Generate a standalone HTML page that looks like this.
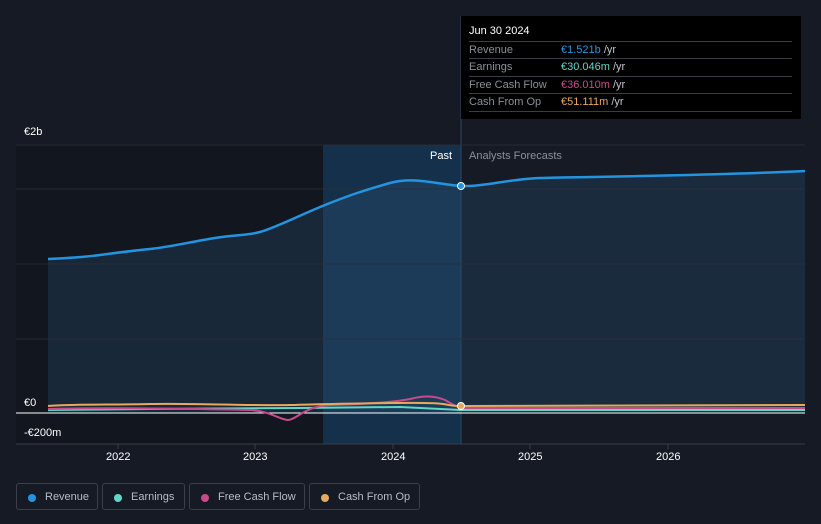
<!DOCTYPE html>
<html><head><meta charset="utf-8"><style>
body{margin:0;width:821px;height:524px;background:#151a24;font-family:"Liberation Sans",sans-serif;overflow:hidden;position:relative}
.t{position:absolute;color:#fff;font-size:11px}
.tip{position:absolute;left:461px;top:16px;width:340px;height:103px;background:#000;color:#fff;font-size:11px}
.tip .h{position:absolute;left:8px;top:9px;font-size:11px}
.row{position:absolute;left:8px;width:323px;border-top:1px solid #3a3d44;height:17px;line-height:17px;color:#8a8f98}
.row span{position:absolute;left:92px}
.row i{font-style:normal;color:#c0c4cc}
.leg{position:absolute;top:483px;height:27px;border:1px solid #3a3f4a;border-radius:3px;color:#b8bcc4;font-size:11px;line-height:27px;box-sizing:border-box}
.leg b{position:absolute;left:11px;top:10px;width:8px;height:8px;border-radius:50%}
.leg span{position:absolute;left:28px}
</style></head><body>
<svg width="821" height="524" style="position:absolute;left:0;top:0">
<rect x="16" y="145" width="307" height="299" fill="#12161e"/>
<rect x="323" y="145" width="138" height="299" fill="#15304a"/>
<path d="M48,259 C70,258 85,257 100,255 S130,251 150,249 S190,242 215,238 S245,236 260,232 S300,215 325,205 S365,190 390,183 S440,185 461,186 S510,179 540,178 S700,176 805,171 L805,413 L48,413 Z" fill="#2a5a80" opacity=".28"/>
<line x1="461" y1="16" x2="461" y2="444" stroke="#2a4a66" stroke-width="1"/>
<g stroke="#2a2f3a" stroke-width="1" opacity=".8"><line x1="16" y1="145" x2="805" y2="145"/><line x1="16" y1="189" x2="805" y2="189"/><line x1="16" y1="264" x2="805" y2="264"/><line x1="16" y1="339" x2="805" y2="339"/></g>
<path d="M48,259 C70,258 85,257 100,255 S130,251 150,249 S190,242 215,238 S245,236 260,232 S300,215 325,205 S365,190 390,183 S440,185 461,186 S510,179 540,178 S700,176 805,171" fill="none" stroke="#2394e0" stroke-width="2.5"/>
<line x1="16" y1="413" x2="805" y2="413" stroke="#fff" stroke-width="1"/>
<line x1="16" y1="444" x2="805" y2="444" stroke="#3a3f4a" stroke-width="1"/>
<path d="M48,410 L150,409 L300,408 L400,407 L461,410 L805,410" fill="none" stroke="#5fd8c8" stroke-width="2"/>
<path d="M48,409 C100,407 200,409 250,410 C270,411 280,420 288,420 C296,420 305,406 330,405 C370,404 395,402 410,399 C425,395 435,396 445,400 C452,404 456,407 461,408 L805,408" fill="none" stroke="#c84a8c" stroke-width="2"/>
<path d="M48,406 C80,404 110,405 150,404 S250,406 290,405 S320,404 390,403 S440,406 461,406 L805,405" fill="none" stroke="#e8a95a" stroke-width="2"/>
<g stroke="#3a3f4a"><line x1="118" y1="444" x2="118" y2="449"/><line x1="255" y1="444" x2="255" y2="449"/><line x1="393" y1="444" x2="393" y2="449"/><line x1="530" y1="444" x2="530" y2="449"/><line x1="668" y1="444" x2="668" y2="449"/></g>
<circle cx="461" cy="186" r="3.5" fill="#2394e0" stroke="#fff" stroke-width="1"/>
<circle cx="461" cy="406" r="3.5" fill="#e8a95a" stroke="#fff" stroke-width="1"/>
</svg>
<div class="t" style="left:24px;top:126px">€2b</div>
<div class="t" style="left:24px;top:397px">€0</div>
<div class="t" style="left:24px;top:427px">-€200m</div>
<div class="t" style="left:430px;top:150px;color:#fff">Past</div>
<div class="t" style="left:469px;top:150px;color:#8a8f98">Analysts Forecasts</div>
<div class="t" style="left:106px;top:451px">2022</div>
<div class="t" style="left:243px;top:451px">2023</div>
<div class="t" style="left:381px;top:451px">2024</div>
<div class="t" style="left:518px;top:451px">2025</div>
<div class="t" style="left:656px;top:451px">2026</div>
<div class="tip"><div class="h">Jun 30 2024</div>
<div class="row" style="top:25px">Revenue<span><span style="position:static;color:#2394e0">€1.521b</span> <i>/yr</i></span></div>
<div class="row" style="top:42px">Earnings<span><span style="position:static;color:#5fd8c8">€30.046m</span> <i>/yr</i></span></div>
<div class="row" style="top:60px">Free Cash Flow<span><span style="position:static;color:#c84a8c">€36.010m</span> <i>/yr</i></span></div>
<div class="row" style="top:77px">Cash From Op<span><span style="position:static;color:#e8a95a">€51.111m</span> <i>/yr</i></span></div>
<div class="row" style="top:95px;height:0"></div>
</div>
<div class="leg" style="left:16px;width:82px"><b style="background:#2394e0"></b><span>Revenue</span></div>
<div class="leg" style="left:102px;width:83px"><b style="background:#5fd8c8"></b><span>Earnings</span></div>
<div class="leg" style="left:189px;width:116px"><b style="background:#c84a8c"></b><span>Free Cash Flow</span></div>
<div class="leg" style="left:309px;width:111px"><b style="background:#e8a95a"></b><span>Cash From Op</span></div>
</body></html>
